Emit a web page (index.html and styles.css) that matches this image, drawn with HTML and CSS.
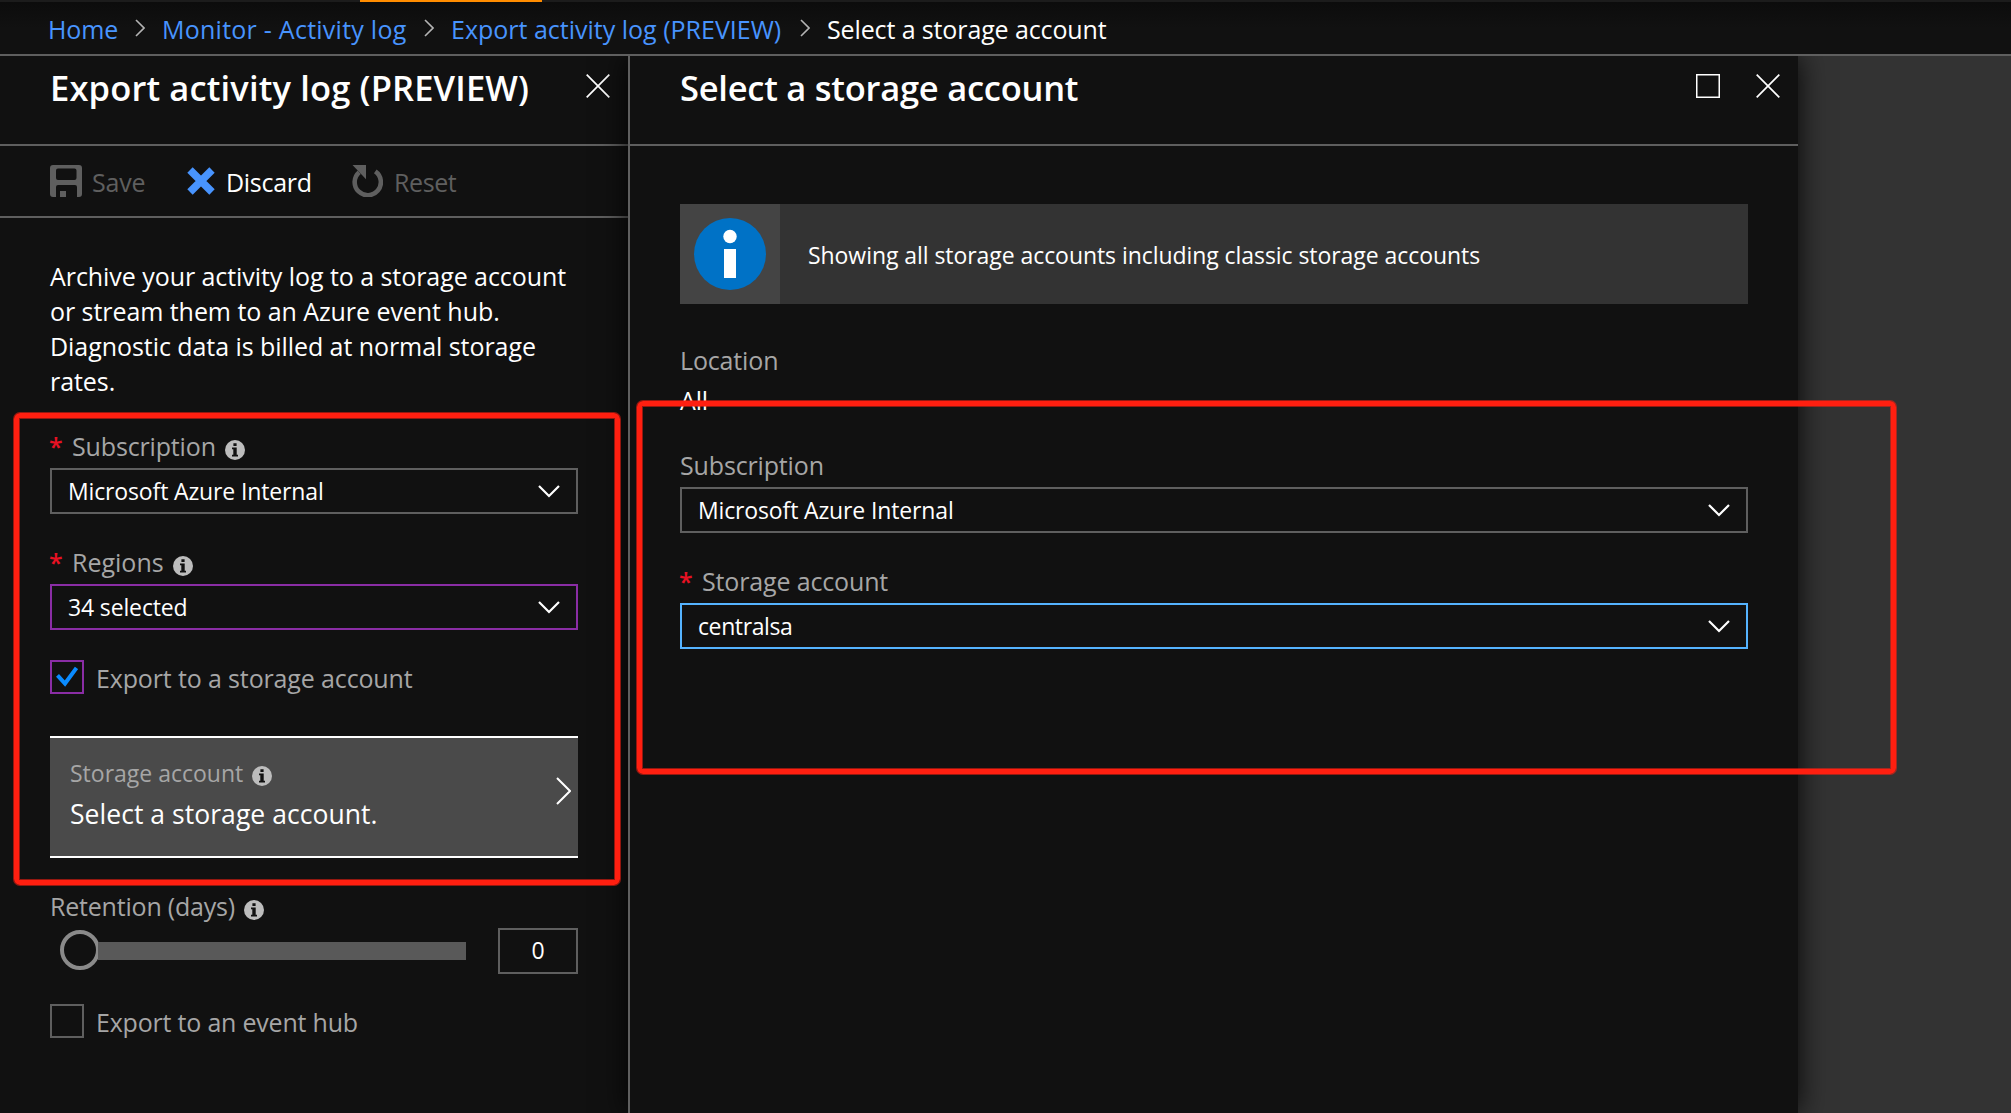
FILE: index.html
```
<!DOCTYPE html>
<html lang="en">
<head>
<meta charset="utf-8">
<title>Select a storage account</title>
<link rel="stylesheet" href="styles.css">
</head>
<body>
<svg class="defs" width="0" height="0">
  <symbol id="close" viewBox="0 0 24 24"><path d="M.7.7 23.3 23.3M23.3.7.7 23.3" fill="none" stroke="#fff" stroke-width="1.7"/></symbol>
  <symbol id="crumb" viewBox="0 0 10 18"><path d="M1 1 9 9 1 17" fill="none" stroke="#b4b4b4" stroke-width="1.6"/></symbol>
  <symbol id="down" viewBox="0 0 22 13"><path d="M1 1 11 11 21 1" fill="none" stroke="#fff" stroke-width="2.2"/></symbol>
  <symbol id="info" viewBox="0 0 20 20"><circle cx="10" cy="10" r="10" fill="#bdbdbd"/><path d="M8.4 3.2h3.2v2.7H8.4zM7 7.5h4.7v7.3H13v1.7H7v-1.7h1.3V9.2H7z" fill="#111"/></symbol>
</svg>
<div class="topbar"><div class="progress"></div></div>
<nav class="breadcrumb">
  <a class="home">Home</a><svg><use href="#crumb"/></svg>
  <a class="monitor">Monitor - Activity log</a><svg><use href="#crumb"/></svg>
  <a class="export">Export activity log (PREVIEW)</a><svg><use href="#crumb"/></svg>
  <span class="current">Select a storage account</span>
</nav>
<main class="journey">
  <section class="blade blade-export">
    <header class="blade-head">
      <h1 class="title-export">Export activity log (PREVIEW)</h1>
      <svg class="win"><use href="#close"/></svg>
    </header>
    <div class="toolbar">
      <div class="cmd off save">
        <svg width="32" height="32" viewBox="0 0 32 32"><path fill="#5f5f5f" fill-rule="evenodd" d="M3 0h26a3 3 0 0 1 3 3v26a3 3 0 0 1-3 3h-2V22a2 2 0 0 0-2-2H8a2 2 0 0 0-2 2v10H3a3 3 0 0 1-3-3V3a3 3 0 0 1 3-3zM8 3.5a2 2 0 0 0-2 2V13a2 2 0 0 0 2 2h16.500a2 2 0 0 0 2-2V5.500a2 2 0 0 0-2-2zM10 26h6v6h-6z"/></svg>
        <span>Save</span>
      </div>
      <div class="cmd discard">
        <svg width="28" height="28" viewBox="0 0 28 28"><path fill="none" stroke="#4894fe" stroke-width="7.600" d="M3 3 25 25M25 3 3 25"/></svg>
        <span>Discard</span>
      </div>
      <div class="cmd off reset">
        <svg width="31" height="32" viewBox="0 0 31 32"><path fill="none" stroke="#5f5f5f" stroke-width="4.600" d="M7.200 7.200A13.100 13.100 0 1 0 23.300 6.400"/><path fill="#5f5f5f" d="M.5 0H14v14.300z"/></svg>
        <span>Reset</span>
      </div>
    </div>
    <div class="body">
      <p class="desc">Archive your activity log to a storage account<br>or stream them to an Azure event hub.<br>Diagnostic data is billed at normal storage<br>rates.</p>
      <div class="field">
        <label><b>*</b><span>Subscription</span><svg class="info"><use href="#info"/></svg></label>
        <div class="select"><span>Microsoft Azure Internal</span><svg><use href="#down"/></svg></div>
      </div>
      <div class="field">
        <label><b>*</b><span class="regions">Regions</span><svg class="info"><use href="#info"/></svg></label>
        <div class="select edited"><span>34 selected</span><svg><use href="#down"/></svg></div>
      </div>
      <div class="check">
        <i class="box edited"><svg width="22" height="22" viewBox="0 0 22 22"><path fill="none" stroke="#0a8bff" stroke-width="4" d="M1.500 9.300 9 17.500 20.500 2"/></svg></i>
        <span>Export to a storage account</span>
      </div>
      <div class="picker">
        <div>
          <div class="picker-label">Storage account<svg class="info"><use href="#info"/></svg></div>
          <div class="picker-value">Select a storage account.</div>
        </div>
        <svg class="go" width="15" height="28" viewBox="0 0 15 28"><path fill="none" stroke="#fff" stroke-width="2" d="M1 1 14 14 1 27"/></svg>
      </div>
      <div class="field">
        <label><span class="retention">Retention (days)</span><svg class="info"><use href="#info"/></svg></label>
        <div class="slider">
          <i class="thumb"></i><i class="track"></i>
          <div class="days">0</div>
        </div>
      </div>
      <div class="check">
        <i class="box"></i>
        <span class="hub">Export to an event hub</span>
      </div>
    </div>
  </section>
  <section class="blade blade-select">
    <header class="blade-head">
      <h1 class="title-select">Select a storage account</h1>
      <svg class="win max" viewBox="0 0 24 24"><path fill="none" stroke="#fff" stroke-width="1.500" d="M.75.75h22.500v22.500H.75z"/></svg>
      <svg class="win"><use href="#close"/></svg>
    </header>
    <div class="body">
      <div class="banner">
        <div class="banner-icon"><svg width="72" height="72" viewBox="0 0 72 72"><circle cx="36" cy="36" r="36" fill="#0072c6"/><circle cx="36" cy="18.500" r="6.700" fill="#fff"/><path fill="#fff" d="M30 31h12v29H30z"/></svg></div>
        <span>Showing all storage accounts including classic storage accounts</span>
      </div>
      <div class="location"><span>Location</span><strong>All</strong></div>
      <div class="field">
        <label><span>Subscription</span></label>
        <div class="select"><span>Microsoft Azure Internal</span><svg><use href="#down"/></svg></div>
      </div>
      <div class="field">
        <label><b>*</b><span>Storage account</span></label>
        <div class="select focused"><span class="account">centralsa</span><svg><use href="#down"/></svg></div>
      </div>
    </div>
  </section>
</main>
<div class="callout callout-export"></div>
<div class="callout callout-select"></div>
</body>
</html>
```
FILE: styles.css
```
* { box-sizing: border-box; }
body {
  position: relative;
  display: flex;
  flex-direction: column;
  height: 1113px;
  margin: 0;
  overflow: hidden;
  background: #333;
  color: #fff;
  font: 25px/34px "Open Sans", "Noto Sans", sans-serif;
}
svg { display: block; flex: none; }
.defs { position: absolute; }

.topbar { height: 2px; flex: none; background: #1c1c1c; }
.progress { width: 182px; height: 2px; margin-left: 360px; background: #ff8c00; }

.breadcrumb {
  display: flex;
  align-items: center;
  gap: 16px;
  flex: none;
  height: 54px;
  padding: 2px 0 0 48px;
  border-bottom: 2px solid #5f5f5f;
  background: linear-gradient(#0c0c0c, #111 26px);
  white-space: nowrap;
}
.breadcrumb a { color: #4894fe; }
.breadcrumb svg { width: 10px; height: 18px; margin: -3px 1px 0 -1px; }
.home { width: 72px; letter-spacing: -.1px; }
.monitor { width: 247px; letter-spacing: .25px; }
.export { width: 334px; }
.current { letter-spacing: -.12px; }

.journey { display: flex; flex: 1; min-height: 0; overflow: hidden; }
.blade { flex: none; background: #111; }
.blade-export { width: 628px; }
.blade-select {
  width: 1170px;
  border-left: 2px solid #5f5f5f;
  box-shadow: 0 0 28px rgba(0, 0, 0, .9);
}
.blade-head {
  display: flex;
  align-items: flex-start;
  height: 90px;
  padding: 8px 18px 0 50px;
  border-bottom: 2px solid #5f5f5f;
}
h1 {
  flex: 1;
  margin: 0;
  font-size: 34.5px;
  line-height: 48px;
  font-weight: 600;
  white-space: nowrap;
}
.title-export { letter-spacing: .15px; }
.title-select { letter-spacing: -.25px; }
.win { width: 24px; height: 24px; margin-top: 10px; }
.max { margin-right: 36px; }

.toolbar {
  display: flex;
  height: 72px;
  padding-left: 50px;
  border-bottom: 2px solid #5f5f5f;
}
.cmd { display: flex; align-items: center; }
.cmd span { padding-top: 2px; }
.off { color: #5f5f5f; }
.save { width: 137px; gap: 10px; letter-spacing: -.2px; }
.discard { width: 165px; gap: 11px; letter-spacing: -.3px; }
.reset { gap: 11px; letter-spacing: -.4px; }

.blade-export .body { padding: 41px 50px 0; }
.blade-select .body { padding: 58px 50px 0; }
.desc { margin: 0 0 -1px; line-height: 35px; letter-spacing: -.06px; white-space: nowrap; }

.field { margin-top: 31px; }
label { display: flex; height: 34px; margin-bottom: 5px; color: #a6a6a6; }
label b { width: 22px; color: #e81123; font-weight: 600; text-indent: -1px; }
label span { letter-spacing: -.15px; }
label .regions { letter-spacing: 0; }
label .retention { letter-spacing: -.2px; }
.info { width: 20px; height: 20px; margin: 11px 0 0 9px; }
.select {
  display: flex;
  align-items: center;
  justify-content: space-between;
  height: 46px;
  padding: 0 16px;
  border: 2px solid #5f5f5f;
  font-size: 23px;
  line-height: 42px;
  letter-spacing: -.14px;
}
.select svg { width: 22px; height: 13px; }
.edited { border-color: #8a2da5 !important; }
.focused { border-color: #55b3ff; }
.account { letter-spacing: -.4px; }

.check { display: flex; gap: 12px; height: 34px; margin-top: 30px; color: #a6a6a6; line-height: 36px; letter-spacing: -.14px; }
.box { display: flex; align-items: center; justify-content: center; width: 34px; height: 34px; border: 2px solid #5f5f5f; }
.hub { letter-spacing: -.2px; }

.picker {
  display: flex;
  justify-content: space-between;
  height: 122px;
  margin-top: 42px;
  padding: 19px 7px 0 20px;
  border: solid #fff;
  border-width: 2px 0;
  background: #4a4a4a;
}
.picker-label { display: flex; height: 32px; color: #a6a6a6; font-size: 23px; line-height: 32px; }
.picker-label .info { margin-top: 9px; }
.picker-value { margin-top: 7px; font-size: 26.5px; line-height: 36px; letter-spacing: .05px; }
.go { margin-top: 20px; }

.slider { display: flex; align-items: center; height: 46px; padding-left: 10px; }
.thumb { width: 40px; height: 40px; margin-top: -2px; border: 4px solid #8a8a8a; border-radius: 50%; }
.track { width: 368px; height: 18px; margin-left: -2px; background: #595959; }
.days { width: 80px; height: 46px; margin-left: auto; border: 2px solid #5f5f5f; font-size: 23px; line-height: 41px; text-align: center; }

.banner { display: flex; align-items: center; height: 100px; background: #333; font-size: 23px; letter-spacing: -.06px; }
.banner-icon { display: flex; align-items: center; justify-content: center; width: 100px; height: 100px; margin-right: 28px; background: #444; }
.banner span { padding-top: 2px; }
.location { display: flex; flex-direction: column; gap: 6px; margin-top: 39px; color: #a6a6a6; letter-spacing: -.15px; }
.location strong { color: #fff; font-weight: 400; }

/* Highlight frames drawn over the page */
.callout {
  position: absolute;
  border: 5px solid #ff1f10;
  border-radius: 6px;
  box-shadow: 0 0 0 1px rgba(255, 31, 16, .55), inset 0 0 0 1px rgba(255, 31, 16, .55);
}
.callout-export { left: 14px; top: 413px; width: 606px; height: 472px; }
.callout-select { left: 637px; top: 401px; width: 1259px; height: 373px; }
```
